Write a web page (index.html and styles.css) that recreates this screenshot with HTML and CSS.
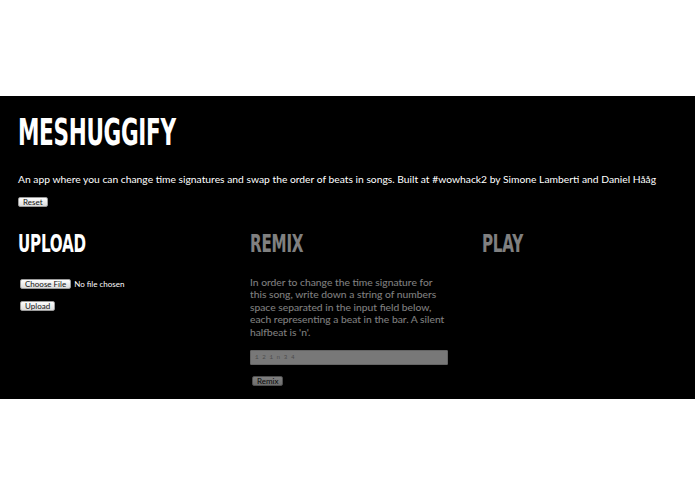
FILE: index.html
```html
<!DOCTYPE html>
<html lang="en">
<head>
<meta charset="utf-8">
<title>Meshuggify</title>
<link rel="stylesheet" href="styles.css">
</head>
<body>
<div class="topbar"></div>
<main class="app">
  <h1 class="title">MESHUGGIFY</h1>
  <p class="intro">An app where you can change time signatures and swap the order of beats in songs. Built at #wowhack2 by Simone Lamberti and Daniel Hååg</p>
  <button class="btn" type="button">Reset</button>

  <div class="steps">
    <section class="step">
      <h2 class="step-title">UPLOAD</h2>
      <form class="upload-form">
        <input class="file" type="file" name="song">
        <button class="btn" type="button">Upload</button>
      </form>
    </section>

    <section class="step step-inactive">
      <h2 class="step-title">REMIX</h2>
      <p class="step-text">In order to change the time signature for this song, write down a string of numbers space separated in the input field below, each representing a beat in the bar. A silent halfbeat is 'n'.</p>
      <input class="pattern" type="text" placeholder="1 2 1 n 3 4">
      <button class="btn" type="button">Remix</button>
    </section>

    <section class="step step-inactive">
      <h2 class="step-title">PLAY</h2>
    </section>
  </div>
</main>
<div class="bottombar"></div>
</body>
</html>
```

FILE: styles.css
```css
html, body {
  margin: 0;
  padding: 0;
  background: #fff;
}

body {
  font-family: "Lato", "Liberation Sans", sans-serif;
  color: #fff;
}

.topbar {
  height: 96px;
}

.bottombar {
  height: 96px;
}

.app {
  background: #000;
  padding: 17px 18px 13px;
}

/* condensed display face: squeeze a bold sans horizontally */
.title {
  margin: 0;
  font-family: "DejaVu Sans Condensed", "Liberation Sans", sans-serif;
  font-weight: 700;
  font-size: 38px;
  line-height: 38px;
  letter-spacing: -0.5px;
  transform: scaleX(0.63);
  transform-origin: left center;
}

.intro {
  margin: 22px 0 11px;
  font-size: 10.3px;
  line-height: 13px;
}

.btn {
  display: block;
  height: 10px;
  margin: 0;
  padding: 0 4px;
  font-family: "Lato", "Liberation Sans", sans-serif;
  font-size: 8px;
  line-height: 8px;
  color: #111;
  background: linear-gradient(#fdfdfd, #dcdcdc);
  border: 1px solid #9a9a9a;
  border-radius: 2px;
}

.steps {
  display: grid;
  grid-template-columns: repeat(3, 198px);
  column-gap: 34px;
  margin-top: 25px;
}

.step-title {
  margin: 0;
  font-family: "DejaVu Sans Condensed", "Liberation Sans", sans-serif;
  font-weight: 700;
  font-size: 24px;
  line-height: 24px;
  letter-spacing: -0.3px;
  transform: scaleX(0.7);
  transform-origin: left center;
}

.step-inactive {
  opacity: 0.5;
}

.upload-form {
  margin-top: 23px;
  display: flex;
  flex-direction: column;
  align-items: flex-start;
  gap: 12px;
}

.file {
  font-family: "Lato", "Liberation Sans", sans-serif;
  font-size: 8px;
  color: #fff;
  height: 10px;
  padding: 0;
  margin: 0 0 0 2px;
}

.file::file-selector-button {
  height: 10px;
  margin: 0 3px 0 0;
  padding: 0 4px;
  font-family: "Lato", "Liberation Sans", sans-serif;
  font-size: 8px;
  line-height: 8px;
  color: #111;
  background: linear-gradient(#fdfdfd, #dcdcdc);
  border: 1px solid #9a9a9a;
  border-radius: 2px;
}

.upload-form .btn {
  margin-left: 2px;
}

.step-text {
  margin: 20px 0 12px;
  font-size: 10.3px;
  line-height: 12.4px;
}

.pattern {
  display: block;
  box-sizing: border-box;
  width: 198px;
  height: 15px;
  margin: 0 0 11px;
  padding: 0 4px;
  font-family: "Liberation Mono", "DejaVu Sans Mono", monospace;
  font-size: 6px;
  background: #f0f0f0;
  border: 1px solid #c8c8c8;
  border-radius: 1px;
}

.pattern::placeholder {
  color: #9a9a9a;
}

.step-inactive .btn {
  margin-left: 2px;
}
```
